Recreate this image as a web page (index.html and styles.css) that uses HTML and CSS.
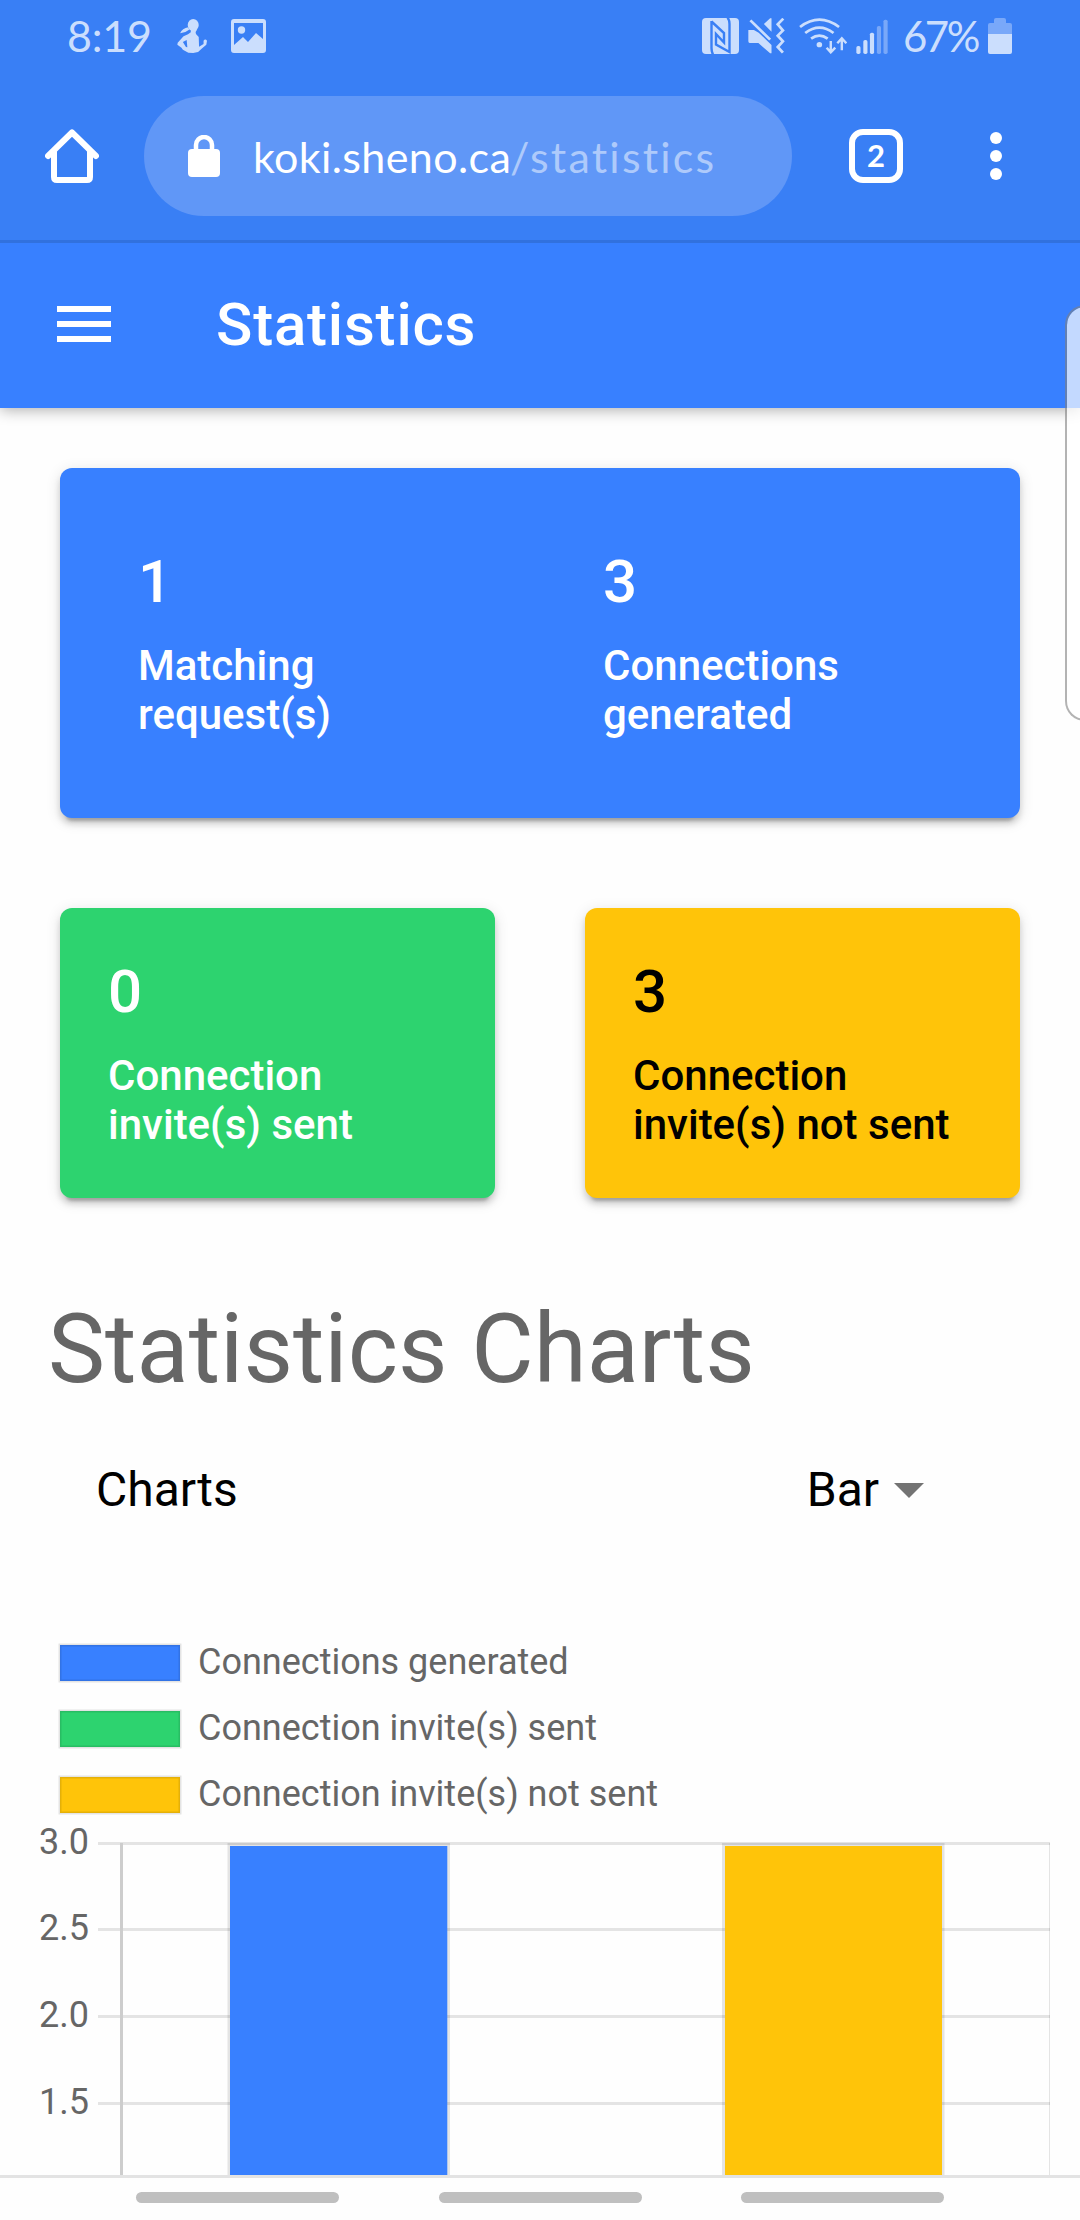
FILE: index.html
```html
<!DOCTYPE html>
<html lang="en">
<head>
<meta charset="utf-8">
<title>Statistics</title>
<link rel="stylesheet" href="styles.css">
</head>
<body>
<div class="screen">
  <header class="system">
    <div class="status">
      <span class="time">8:19</span>
      <svg class="s-person" width="30" height="34" viewBox="513 58 87 102" preserveAspectRatio="none">
        <ellipse cx="560" cy="76" rx="16" ry="18"/>
        <path d="M522 101Q528 86 546 83L548 90Q538 99 522 101Z"/>
        <path fill-rule="evenodd" d="M553 90L571 90L567 97L568 103L576 112L577 141L590 133L590 123Q595 116 600 123L598 135L586 146L574 157L560 160L546 159L530 150L526 144L514 135L515 129L532 110L545 104L553 98ZM530 127L541 121L543 143L539 142Z"/>
      </svg>
      <svg class="s-image" width="35" height="34" viewBox="0 0 35 34">
        <path fill-rule="evenodd" d="M3 0H32Q35 0 35 3V31Q35 34 32 34H3Q0 34 0 31V3Q0 0 3 0ZM3 4V26L12 18L17 23L25 14L32 20V4Z"/>
        <circle cx="10.500" cy="11" r="3.700"/>
      </svg>
      <svg class="s-nfc" width="37" height="36" viewBox="0 0 37 36">
        <rect width="37" height="36" rx="4"/>
        <path class="line" d="M9.500 3V30Q9.500 34 11 36.500M9.500 3.500L22 15V24.500L14 16V26.500L27.500 34V6Q27.500 2 25.500 -0.500"/>
      </svg>
      <svg class="s-mute" width="37" height="36" viewBox="603 54 107 108" preserveAspectRatio="none">
        <path d="M604 90H620L634 98L671 135V160H667L633 129H608Q604 129 604 124ZM649 72L667 55H671V95Z"/>
        <path class="stroke" d="M610 61L667 119M705 56L689 73L704 91L689 107L704 124L689 141L704 158"/>
      </svg>
      <svg class="s-wifi" width="48" height="36" viewBox="752 54 139 108" preserveAspectRatio="none">
        <path class="stroke" d="M755 81Q811 37 868 81M770 99Q811 67 852 99M787 116Q811 98 835 116"/>
        <circle cx="811" cy="134" r="8"/>
        <path class="arrow" d="M844 123V156M832 143L844 157L857 143M876 151V118M863 130L876 115L889 130"/>
      </svg>
      <svg class="s-signal" width="32" height="36" viewBox="918 54 92 108" preserveAspectRatio="none">
        <rect x="919" y="138" width="12" height="24" rx="5"/><rect x="939" y="120" width="12" height="42" rx="5"/><rect x="958" y="98" width="12" height="64" rx="5"/>
        <g class="dim"><rect x="978" y="78" width="12" height="84" rx="5"/><rect x="997" y="59" width="12" height="103" rx="5"/></g>
      </svg>
      <span class="percent">67%</span>
      <svg class="s-battery" width="24" height="36" viewBox="0 0 24 36">
        <path class="dim" d="M0 16V7Q0 5 2 5H6V2Q6 0 8 0H16Q18 0 18 2V5H22Q24 5 24 7V16Z"/>
        <path d="M0 16H24V34Q24 36 22 36H2Q0 36 0 34Z"/>
      </svg>
    </div>
    <div class="browser">
      <svg class="home" width="54" height="54" viewBox="0 0 54 54">
        <path d="M3 27L27 3.500L51 27M9 22V48Q9 51 12 51H42Q45 51 45 48V22"/>
      </svg>
      <div class="address">
        <svg width="32" height="42" viewBox="0 0 32 42">
          <rect y="14" width="32" height="28" rx="4"/>
          <path d="M8 16V10A8 8 0 0 1 24 10V16"/>
        </svg>
        <span class="host">koki.sheno.ca</span><span class="path">/statistics</span>
      </div>
      <div class="tabs">2</div>
      <div class="more"><i></i><i></i><i></i></div>
    </div>
  </header>

  <div class="appbar">
    <div class="menu"><i></i><i></i><i></i></div>
    <h1 class="title">Statistics</h1>
  </div>

  <main class="content">
    <section class="card summary">
      <div class="stat"><div class="num">1</div><div class="label">Matching<br>request(s)</div></div>
      <div class="stat"><div class="num">3</div><div class="label">Connections<br>generated</div></div>
    </section>
    <div class="pair">
      <section class="card small green"><div class="num">0</div><div class="label">Connection<br>invite(s) sent</div></section>
      <section class="card small yellow"><div class="num">3</div><div class="label">Connection<br>invite(s) not sent</div></section>
    </div>
    <h2 class="heading">Statistics Charts</h2>
    <div class="picker">
      <span>Charts</span>
      <span class="choice">Bar<i class="caret"></i></span>
    </div>
    <ul class="legend">
      <li><i class="swatch blue"></i><span>Connections generated</span></li>
      <li><i class="swatch green"></i><span>Connection invite(s) sent</span></li>
      <li><i class="swatch yellow"></i><span>Connection invite(s) not sent</span></li>
    </ul>
    <svg class="chart" width="1080" height="355" viewBox="0 1820 1080 355">
      <g class="grid">
        <path d="M98 1842H1050V1845H98ZM98 1928H1050V1931H98ZM98 2015H1050V2018H98ZM98 2102H1050V2105H98Z"/>
        <path d="M1049 1843H1050V2175H1049Z"/>
      </g>
      <path class="axis" d="M120 1843H123V2175H120Z"/>
      <path class="edge" d="M227.500 1843H450V2175H227.500Z"/>
      <path class="edge" d="M722 1843H944.500V2175H722Z"/>
      <path class="bar-blue" d="M230 1846H447.300V2175H230Z"/>
      <path class="bar-yellow" d="M725 1846H942V2175H725Z"/>
      <g class="ticks">
        <text x="39" y="1854">3.0</text>
        <text x="39" y="1940">2.5</text>
        <text x="39" y="2027">2.0</text>
        <text x="39" y="2114">1.5</text>
      </g>
    </svg>
  </main>
  <nav class="gestures"><i></i><i></i><i></i></nav>
  <div class="edge-panel"></div>
</div>
</body>
</html>
```
FILE: styles.css
```css
* { box-sizing: border-box; }
body { margin: 0; font-family: Roboto, sans-serif; background: #fefefe; }
i { display: block; }
svg { display: block; flex: none; }

.screen { position: relative; width: 1080px; height: 2220px; overflow: hidden; display: flex; flex-direction: column; }

/* phone status bar and browser toolbar */
.system { position: relative; z-index: 1; height: 243px; flex: none; background: #397ff5; border-bottom: 3px solid #3171de; font-family: Lato, sans-serif; }
.status { height: 72px; display: flex; align-items: center; padding-left: 67px; color: #cbdefd; fill: #cbdefd; }
.time { width: 110px; font-size: 43px; line-height: 72px; letter-spacing: -.2px; }
.s-image { margin-left: 24px; }
.s-nfc { margin-left: 436px; }
.s-mute { margin-left: 9px; }
.s-wifi { margin-left: 14px; }
.s-signal { margin-left: 9px; }
.percent { width: 85px; margin-left: 15px; font-size: 42px; line-height: 72px; letter-spacing: -2.500px; }
.line { fill: none; stroke: #397ff5; stroke-width: 2.400; }
.stroke { fill: none; stroke: #cbdefd; stroke-width: 8; }
.arrow { fill: none; stroke: #cbdefd; stroke-width: 7; }
.dim { fill: #79a8f9; }

.browser { height: 168px; display: flex; align-items: center; padding: 0 0 0 45px; }
.home { fill: none; stroke: #fff; stroke-width: 6; stroke-linecap: round; stroke-linejoin: round; }
.address { width: 648px; height: 120px; margin-left: 45px; border-radius: 60px; background: #6097f7; display: flex; align-items: center; padding-left: 44px; font-size: 43px; color: #fff; }
.address svg { fill: #fff; margin-right: 33px; }
.address svg path { fill: none; stroke: #fff; stroke-width: 4.500; }
.host { width: 257px; white-space: nowrap; letter-spacing: .4px; }
.path { color: #aecafb; white-space: nowrap; letter-spacing: 2.200px; }
.tabs { width: 54px; height: 54px; margin-left: 57px; border: 6px solid #fff; border-radius: 14px; color: #fff; font-size: 31px; font-weight: 700; line-height: 40px; text-align: center; }
.more { margin-left: 87px; display: flex; flex-direction: column; gap: 6px; }
.more i { width: 12px; height: 12px; border-radius: 50%; background: #fff; }

.appbar { height: 165px; flex: none; background: #3880ff; display: flex; align-items: center; padding: 0 0 3px 57px; box-shadow: 0 2px 14px rgba(0,0,0,.32); }
.menu { width: 54px; display: flex; flex-direction: column; gap: 9px; }
.menu i { height: 6px; background: #fff; }
.title { margin: 2px 0 0 105px; color: #fff; font-size: 60px; font-weight: 500; line-height: 70px; letter-spacing: .8px; }

.content { height: 1767px; flex: none; padding-top: 60px; overflow: hidden; }
.card { border-radius: 12px; box-shadow: 0 9px 3px -6px rgba(0,0,0,.2), 0 6px 6px rgba(0,0,0,.14), 0 3px 15px rgba(0,0,0,.12); }
.summary { height: 350px; margin: 0 60px; padding: 30px 15px; background: #3880ff; color: #fff; display: grid; grid-template-columns: 1fr 1fr; }
.stat { padding: 49px 63px 0; }
.num { font-size: 60px; font-weight: 500; line-height: 70px; margin-bottom: 24px; }
.label { font-size: 42px; font-weight: 500; line-height: 49px; white-space: nowrap; }
.pair { display: grid; grid-template-columns: 1fr 1fr; gap: 90px; margin: 90px 60px 0; }
.small { height: 290px; padding: 49px 48px 0; }
.blue { background: #3880ff; }
.green { background: #2dd36f; color: #fff; }
.yellow { background: #ffc409; color: #000; }

.heading { margin: 94px 0 0 48px; font-size: 96px; font-weight: 400; line-height: 114px; color: #666; }
.picker { margin-top: 56px; padding: 0 156px 0 96px; display: flex; justify-content: space-between; font-size: 48px; line-height: 56px; color: #000; }
.choice { display: flex; align-items: center; }
.caret { margin: 1px 0 0 15px; border: 15px solid transparent; border-top-color: #737373; border-bottom: 0; }

.legend { list-style: none; margin: 112px 0 0; padding: 0 0 0 60px; font-size: 36px; color: #666; }
.legend li { height: 66px; display: flex; align-items: center; line-height: 42px; }
.legend span { margin-bottom: 2px; }
.swatch { width: 120px; height: 36px; margin-right: 18px; box-shadow: 0 0 0 1.500px rgba(0,0,0,.1), inset 0 0 0 1.500px rgba(0,0,0,.1); }

.chart { margin-top: -8px; }
.grid path, .edge { fill: rgba(0,0,0,.1); }
.axis { fill: #cdcdcd; }
.bar-blue { fill: #3880ff; }
.bar-yellow { fill: #ffc409; }
.ticks { font-size: 36px; fill: #666; }

.gestures { height: 45px; flex: none; border-top: 3px solid #e3e3e3; background: #fefefe; display: flex; gap: 99.500px; padding: 14px 0 0 136px; }
.gestures i { width: 203px; height: 11px; border-radius: 6px; background: #bfbfbf; }

.edge-panel { position: absolute; z-index: 2; left: 1065px; top: 305px; width: 40px; height: 416px; border: 2px solid rgba(128,128,128,.6); border-radius: 20px; background: rgba(255,255,255,.7); background-clip: padding-box; }
```
